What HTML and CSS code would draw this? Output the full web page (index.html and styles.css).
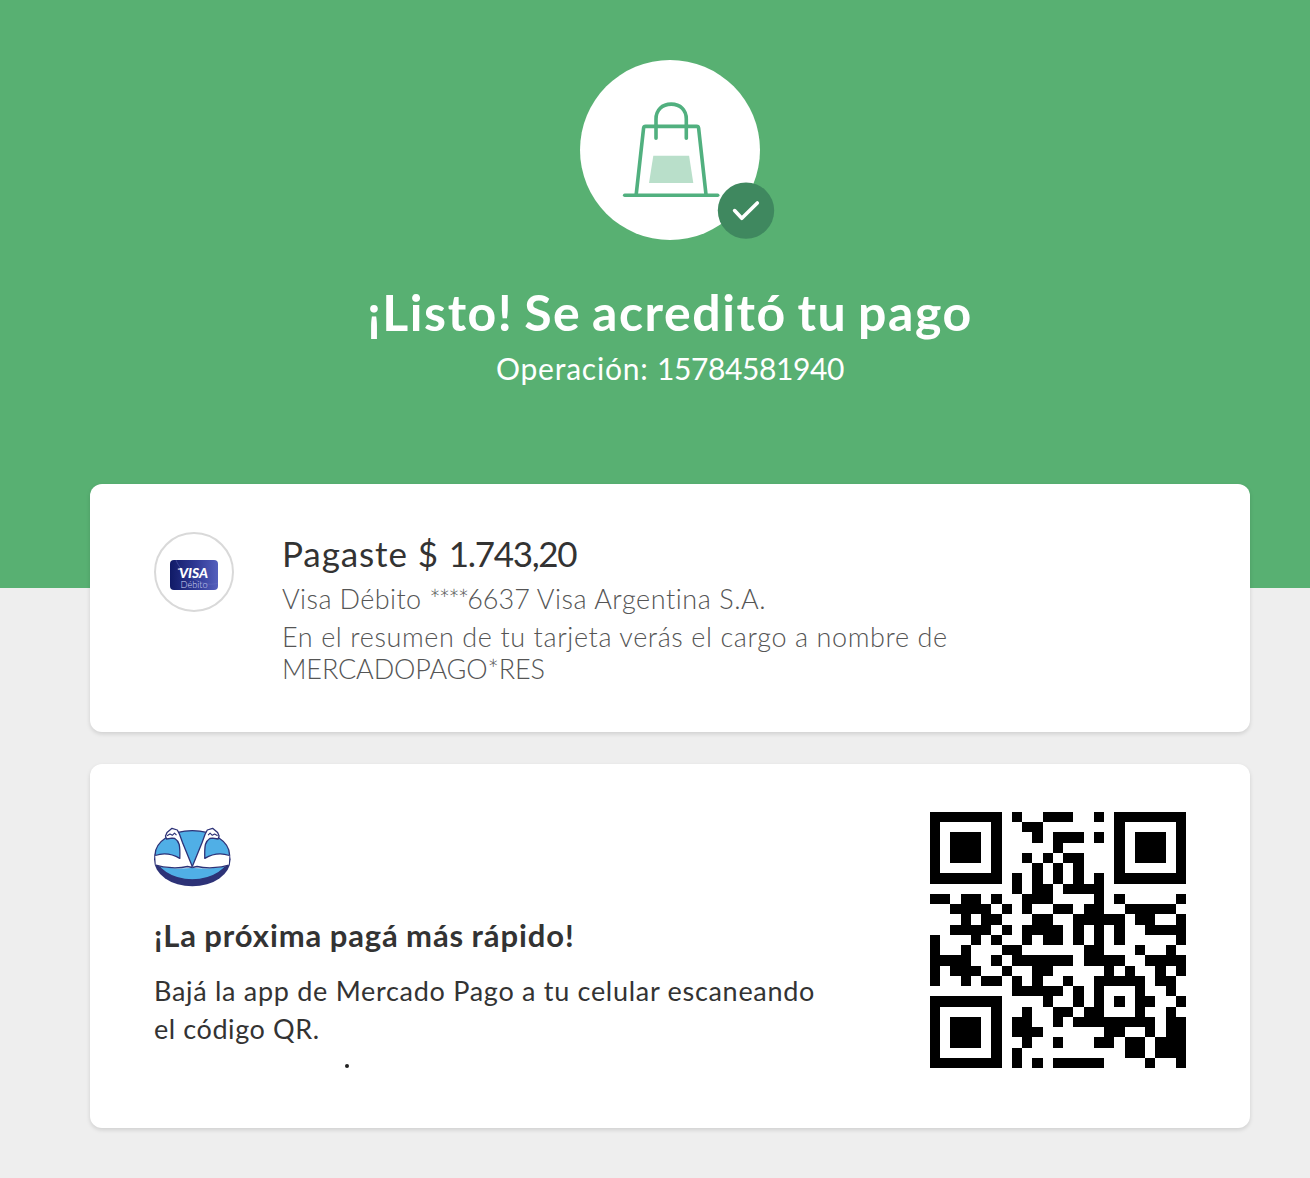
FILE: index.html
```html
<!DOCTYPE html>
<html lang="es">
<head>
<meta charset="utf-8">
<title>Se acreditó tu pago</title>
<link rel="stylesheet" href="styles.css">
</head>
<body>
<header class="hero">
  <svg class="hero-icon" width="220" height="200" viewBox="0 0 220 200" fill="none" stroke-linecap="round" stroke-linejoin="round">
    <circle cx="100" cy="100" r="90" fill="#fff"/>
    <path d="M83.3 105.7h35.8l4.2 27.3H79z" fill="#b9dfca"/>
    <g stroke="#51b07f" stroke-width="3.6">
      <path d="M66.2 144.5 73.6 78q.3-1.6 1.9-1.6h51.200q1.600 0 1.900 1.600l7.400 66.500"/>
      <path d="M86 88.300V69c0-9 6-14.900 15.200-14.900s15.100 5.900 15.100 14.900v19.300"/>
      <path d="M54.700 145.200h93"/>
    </g>
    <circle cx="176" cy="160.600" r="28.200" fill="#3f885f"/>
    <path d="M164.600 160.600l7.200 7.700 15.500-15.300" stroke="#fff" stroke-width="3.600"/>
  </svg>
  <h1 class="hero-title">¡Listo! Se acreditó tu pago</h1>
  <p class="hero-sub"><span class="op-label">Operación: </span><span class="op-number">15784581940</span></p>
</header>
<main class="content">
  <section class="card payment">
    <div class="method">
      <svg width="48" height="30" viewBox="0 0 48 30">
        <defs><linearGradient id="visa" x1="0" y1="0" x2="1" y2="0"><stop offset="0" stop-color="#101a66"/><stop offset=".55" stop-color="#303a96"/><stop offset="1" stop-color="#5560bd"/></linearGradient></defs>
        <rect width="48" height="30" rx="4" fill="url(#visa)"/>
        <path d="M6 0c3 8 10 15 20 20s16 5 22 3" fill="none" stroke="#6872c4" stroke-opacity=".4"/>
        <path d="M7.800 9.100h4.500" stroke="#fff"/>
        <text x="9" y="18" textLength="29" lengthAdjust="spacingAndGlyphs" class="visa-name">VISA</text>
        <text x="10.500" y="28" textLength="27" lengthAdjust="spacingAndGlyphs" class="visa-type">Débito</text>
      </svg>
    </div>
    <div class="payment-text">
      <h2 class="amount"><span class="amount-label">Pagaste $ </span><span class="amount-value">1.743,20</span></h2>
      <p class="detail source"><span class="card-type">Visa Débito </span><span class="card-mask">****</span>6637<span class="issuer"> Visa Argentina S.A.</span></p>
      <p class="detail"><span class="summary">En el resumen de tu tarjeta verás el cargo a nombre de</span><br><span class="merchant">MERCADOPAGO*RES</span></p>
    </div>
  </section>
  <section class="card app">
    <div class="app-text">
      <svg class="logo" width="78" height="60" viewBox="0 0 78 60" stroke-linejoin="round">
        <defs>
          <g id="arm" stroke="#2d3277" stroke-width="1.300">
            <path d="M1.200 28.500C9 25.800 18 26.700 25.800 31.400 26 26 25.900 21 25.200 17.500c-.8-2.500-2.400-4.800-4.400-6l-2.800-.3-5.500.8-1-3L13 5.600l5-4.300 5.300 1.700 2.200 4.200 3 8.300 5.500 13.500 4.300 10.500-1.600 1.500C25 42 11 41.200 1.800 38.200z" fill="#fff" stroke="none"/>
            <path d="M1.200 28.500C9 25.800 18 26.700 25.800 31.400 26 26 25.900 21 25.200 17.500c-.8-2.500-2.400-4.800-4.400-6l-2.800-.3-5.500.8-1-3L13 5.600l5-4.300 5.300 1.700 2.200 4.200 3 8.300 5.500 13.500 4.300 10.500M1.800 38.200C11 41.200 25 41.500 33.500 39.500l4.800 1" fill="none"/>
            <path d="M13 8.800l3-1.800 2.300 1.300 2.200-2.200 2 2" fill="none" stroke-width="1.100"/>
          </g>
        </defs>
        <ellipse cx="38.300" cy="32.300" rx="38.300" ry="27" fill="#2d3277"/>
        <ellipse cx="38.300" cy="28.200" rx="37.300" ry="24.600" fill="#50afe6" stroke="#2d3277" stroke-width="1.300"/>
        <use href="#arm"/>
        <use href="#arm" transform="translate(76.600 0) scale(-1 1)"/>
      </svg>
      <h2 class="app-title">¡La próxima pagá más rápido!</h2>
      <p class="app-body"><span class="scan">Bajá la app de Mercado Pago a tu celular escaneando</span><br><span class="scan-end">el código QR.</span></p>
      <span class="dot"></span>
    </div>
    <svg class="qr" width="256" height="256" viewBox="0 0 25 25" shape-rendering="crispEdges"></svg>
  </section>
</main>
<script src="qr.js"></script>
</body>
</html>
```
FILE: styles.css
```css
* { box-sizing: border-box; }
body {
  margin: 0;
  min-height: 1178px;
  background: #eee;
  color: #333;
  font-family: Lato, "Open Sans", sans-serif;
}
h1, h2, p { margin: 0; font-weight: 400; white-space: nowrap; }
.hero {
  height: 588px;
  padding: 50px 0 0 30px;
  background: #58b072;
  color: #fff;
  display: flex;
  flex-direction: column;
  align-items: center;
}
.hero-icon { margin-left: 20px; }
.hero-title { margin-top: 30px; font-size: 50px; line-height: 64px; font-weight: 700; letter-spacing: 1.55px; word-spacing: -3px; }
.hero-sub { margin-top: 4px; font-size: 30px; line-height: 40px; white-space: pre; }
.op-label { letter-spacing: .8px; }
.op-number { letter-spacing: -.4px; }
.content {
  margin: -104px 60px 0 90px;
  display: flex;
  flex-direction: column;
  gap: 32px;
}
.card {
  background: #fff;
  border-radius: 12px;
  box-shadow: 0 2px 4px rgba(0, 0, 0, .13);
  display: flex;
}
.payment { height: 248px; padding: 48px 64px; gap: 48px; }
.method {
  width: 80px;
  height: 80px;
  flex: none;
  border: 2px solid #d9d9d9;
  border-radius: 50%;
  display: flex;
  align-items: center;
  justify-content: center;
  padding-top: 6px;
}
.visa-name { fill: #fff; font: italic 900 13px Lato, sans-serif; }
.visa-type { fill: #d5d9f5; font: 300 9px Lato, sans-serif; }
.amount { margin-top: -1px; font-size: 35px; line-height: 44px; }
.amount-label { letter-spacing: .9px; }
.amount-value { letter-spacing: -1.3px; }
.detail { font-size: 27px; line-height: 32px; font-weight: 300; color: #555; }
.source { margin: 8px 0 6px; }
.card-type { letter-spacing: .4px; }
.card-mask { letter-spacing: -2px; }
.issuer { letter-spacing: .55px; }
.summary { letter-spacing: .6px; }
.merchant { letter-spacing: -.15px; }
.app { height: 364px; padding: 48px 64px; justify-content: space-between; }
.app-text { display: flex; flex-direction: column; align-items: flex-start; padding-top: 15px; }
.app-title { margin-top: 28px; font-size: 31px; line-height: 40px; font-weight: 700; letter-spacing: .9px; word-spacing: -1px; }
.app-body { margin-top: 17px; font-size: 27px; line-height: 38px; }
.scan { letter-spacing: .71px; }
.scan-end { letter-spacing: .58px; }
.dot { width: 4px; height: 4px; margin: 16px 0 0 191px; border-radius: 50%; background: #222; }
.qr { flex: none; }
```
FILE: qr.js
```js
const rows = [
  "1111111010011100101111111",
  "1000001001100000001000001",
  "1011101000101110101011101",
  "1011101000001000001011101",
  "1011101001010110001011101",
  "1000001000101010001000001",
  "1111111010101010101111111",
  "0000000010110111100000000",
  "1101101001110000101000001",
  "0011110101001101100111110",
  "0001011000110011111011001",
  "0011110101111010101001111",
  "1000101001011010101000001",
  "1001000110000001100010010",
  "1111001011111101111001111",
  "1011100100110000010100101",
  "1001011010100100111110110",
  "0000000011111010100010010",
  "1111111000010010101011001",
  "1000001001001101100010010",
  "1011101011001011111111011",
  "1011101011100000011001011",
  "1011101001001000110110111",
  "1000001010000000000110111",
  "1111111010101111100001001"
];
const path = document.createElementNS("http://www.w3.org/2000/svg", "path");
let d = "";
rows.forEach((row, y) => {
  for (const run of row.matchAll(/1+/g)) {
    d += `M${run.index} ${y}h${run[0].length}v1h-${run[0].length}z`;
  }
});
path.setAttribute("d", d);
document.querySelector(".qr").append(path);
```
